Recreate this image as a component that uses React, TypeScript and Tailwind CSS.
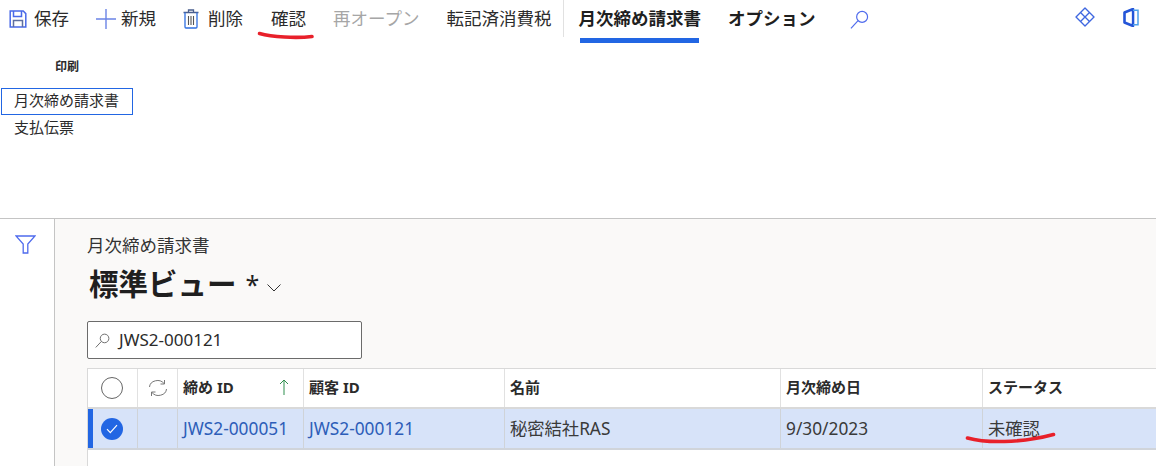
const FONT = "font-['Noto_Sans','Noto_Sans_CJK_JP',sans-serif]";

function SaveIcon() {
  return (
    <svg width="18" height="18" viewBox="0 0 18 18" fill="none" stroke="#4a6ae8" strokeWidth="1.5">
      <path d="M1.2 1h13l2.6 2.6V17H1.2z" />
      <path d="M4.5 1v5.5h8V1" />
      <path d="M4.5 17v-6.5h9V17" stroke="#5f6f9f" />
    </svg>
  );
}

function PlusIcon() {
  return (
    <svg width="20" height="20" viewBox="0 0 20 20" fill="none" stroke="#6b84e6" strokeWidth="1.4">
      <path d="M10 0v20M0 10h20" />
    </svg>
  );
}

function TrashIcon() {
  return (
    <svg width="16" height="20" viewBox="0 0 16 20" fill="none" stroke="#2f6fe0" strokeWidth="1.3">
      <path d="M0.5 3.5h15M5.5 3.5V1h5v2.5" stroke="#4a5f8f" />
      <path d="M2 3.5V18a1 1 0 0 0 1 1h10a1 1 0 0 0 1-1V3.5" />
      <path d="M5.5 7v9M8 7v9M10.5 7v9" stroke="#555" strokeWidth="1.1" />
    </svg>
  );
}

function SearchIcon({ color, size }: { color: string; size: number }) {
  return (
    <svg width={size} height={size} viewBox="0 0 16 16" fill="none" stroke={color} strokeWidth="1">
      <circle cx="10.2" cy="5.8" r="4.6" />
      <path d="M6.8 9 0.8 15.4" />
    </svg>
  );
}

function DiamondIcon() {
  return (
    <svg width="20" height="20" viewBox="0 0 20 20" fill="none" stroke="#3f67e0" strokeWidth="1.4" strokeLinejoin="round">
      <path d="M10 1 19 10 10 19 1 10z" />
      <path d="M5.5 5.5 14.5 14.5M14.5 5.5 5.5 14.5" />
    </svg>
  );
}

function OfficeIcon() {
  return (
    <svg width="16" height="19" viewBox="0 0 16 19" fill="none">
      <path d="M1.5 4.5 10 1v17l-8.5-3.5z" stroke="#2455d8" strokeWidth="2.6" strokeLinejoin="round" />
      <path d="M4.5 5.5 8.5 4v11l-4-1.5z" fill="white" />
      <path d="M10 2.2h5v14.6h-5" stroke="#4ca0ea" strokeWidth="1.5" />
    </svg>
  );
}

function FilterIcon() {
  return (
    <svg width="21" height="19" viewBox="0 0 21 19" fill="none" stroke="#4f6bed" strokeWidth="1.3">
      <path d="M1 1h19l-7.2 8v9H8.2V9z" />
    </svg>
  );
}

function ToolbarButton({ icon, label, muted, className }: { icon?: React.ReactNode; label: string; muted?: boolean; className?: string }) {
  return (
    <div className={`flex items-center text-[17.5px] leading-none ${muted ? "text-[#a6a6a6]" : "text-[#2b2b2b]"} ${className ?? "gap-[7px]"}`}>
      {icon}
      <span>{label}</span>
    </div>
  );
}

function Toolbar() {
  return (
    <div className="flex h-[43px] items-start">
      <div className="flex h-[38px] items-center pl-[9px]">
        <ToolbarButton icon={<SaveIcon />} label="保存" />
        <ToolbarButton icon={<PlusIcon />} label="新規" className="ml-[27px] gap-[5px]" />
        <ToolbarButton icon={<TrashIcon />} label="削除" className="ml-[27px] gap-[9px]" />
        <ToolbarButton label="確認" className="ml-[28px]" />
        <ToolbarButton label="再オープン" muted className="ml-[27px]" />
        <ToolbarButton label="転記済消費税" className="ml-[27px]" />
      </div>
      <div className="ml-[12px] h-[37px] w-px bg-[#e1e1e1]" />
      <div className="relative ml-[14px] flex h-[38px] items-center text-[17.5px] font-bold leading-none text-[#1f1f1f]">
        月次締め請求書
        <div className="absolute left-[2px] right-[2px] top-[38px] h-[5px] bg-[#2266e3]" />
      </div>
      <div className="ml-[27px] flex h-[38px] items-center text-[17.5px] font-bold leading-none text-[#1f1f1f]">
        オプション
      </div>
      <div className="ml-[35px] flex h-[38px] items-center">
        <SearchIcon color="#4f6bed" size={19} />
      </div>
      <div className="ml-auto flex h-[34px] items-center gap-[28px] pr-[17px]">
        <DiamondIcon />
        <OfficeIcon />
      </div>
    </div>
  );
}

function PrintMenu() {
  return (
    <div className="h-[176px] border-b border-[#c4c4c4]">
      <div className="pl-[55px] pt-[16px] text-[12px] font-bold leading-[16px] text-[#2b2b2b]">印刷</div>
      <div className="ml-[1px] mt-[13px] flex h-[27px] w-[132px] items-center border border-[#2266e3] pb-[3px] pl-[12px] text-[15px] text-[#2b2b2b]">
        月次締め請求書
      </div>
      <div className="flex h-[27px] items-center pb-[3px] pl-[14px] text-[15px] text-[#2b2b2b]">支払伝票</div>
    </div>
  );
}

function HeaderCell({ label, className, children }: { label: string; className: string; children?: React.ReactNode }) {
  return (
    <div className={`flex items-center justify-between border-r border-[#e1e1e1] pb-[2px] pl-[5px] text-[15px] font-bold text-[#2b2b2b] ${className}`}>
      <span>{label}</span>
      {children}
    </div>
  );
}

function RowCell({ label, className, link }: { label: string; className: string; link?: boolean }) {
  return (
    <div className={`flex items-center border-r border-[#cfd3d8] pl-[5px] text-[17.3px] ${link ? "text-[#2d5db8]" : "text-[#3a3a3a]"} ${className}`}>
      {label}
    </div>
  );
}

function Grid() {
  return (
    <div className="ml-[32px] mt-[9px] flex-1 border-l border-t border-[#d9d9d9] bg-white">
      <div className="flex h-[40px] border-b-2 border-[#d9d9d9]">
        <div className="flex w-[50px] items-center justify-center border-r border-[#e1e1e1] pr-[1px]">
          <div className="h-[22px] w-[22px] rounded-full border border-[#666]" />
        </div>
        <div className="flex w-[40px] items-center justify-center border-r border-[#e1e1e1]">
          <svg width="20" height="18" viewBox="0 0 20 18" fill="none" stroke="#777" strokeWidth="1">
            <path d="M1.5 8A8 7 0 0 1 16 4.5M18.5 10A8 7 0 0 1 4 13.5" />
            <path d="M16.5 1v4h-4M3.5 17v-4h4" />
          </svg>
        </div>
        <HeaderCell label="締め ID" className="w-[126px]">
          <svg className="mr-[14px]" width="10" height="16" viewBox="0 0 10 16" fill="none" stroke="#2f8f4e" strokeWidth="1">
            <path d="M5 16V1M1 5l4-4 4 4" />
          </svg>
        </HeaderCell>
        <HeaderCell label="顧客 ID" className="w-[201px]" />
        <HeaderCell label="名前" className="w-[276px]" />
        <HeaderCell label="月次締め日" className="w-[202px]" />
        <HeaderCell label="ステータス" className="flex-1 border-r-0" />
      </div>
      <div className="flex h-[41px] border-b-2 border-[#d0d4da] bg-[#d7e3f9]">
        <div className="flex w-[50px] items-center justify-center border-r border-[#cfd3d8] border-l-[5px] border-l-[#2266e3] pr-[6px]">
          <div className="flex h-[22px] w-[22px] items-center justify-center rounded-full bg-[#2266e3]">
            <svg width="12" height="10" viewBox="0 0 12 10" fill="none" stroke="white" strokeWidth="1.2">
              <path d="M1 5.2 4.3 8.6 11 1.2" />
            </svg>
          </div>
        </div>
        <div className="w-[40px] border-r border-[#cfd3d8]" />
        <RowCell label="JWS2-000051" link className="w-[126px]" />
        <RowCell label="JWS2-000121" link className="w-[201px]" />
        <RowCell label="秘密結社RAS" className="w-[276px]" />
        <RowCell label="9/30/2023" className="w-[202px]" />
        <RowCell label="未確認" className="flex-1 border-r-0" />
      </div>
    </div>
  );
}

function ListPanel() {
  return (
    <div className="flex flex-1">
      <div className="w-[55px] shrink-0 border-r border-[#c4c4c4] bg-white pl-[15px] pt-[16px]">
        <FilterIcon />
      </div>
      <div className="flex min-w-0 flex-1 flex-col bg-[#faf9f8]">
        <div className="ml-[32px] mt-[15px] text-[17.5px] leading-[22px] text-[#333]">月次締め請求書</div>
        <div className="ml-[34px] mt-[10px] flex h-[36px] items-center text-[29.5px] font-bold leading-none text-[#1f1f1f]">
          標準ビュー
          <span className="ml-[9px] text-[25px] font-normal">*</span>
          <svg className="ml-[8px] mt-[8px]" width="14" height="8" viewBox="0 0 14 8" fill="none" stroke="#333" strokeWidth="1">
            <path d="M0.5 0.5 7 7l6.5-6.5" />
          </svg>
        </div>
        <div className="ml-[32px] mt-[19px] flex h-[38px] w-[275px] items-center rounded-[2px] border border-[#6b6b6b] bg-white pl-[7px] text-[17px] text-[#2b2b2b]">
          <SearchIcon color="#666" size={15} />
          <span className="ml-[9px]">JWS2-000121</span>
        </div>
        <Grid />
      </div>
    </div>
  );
}

export default function App() {
  return (
    <div className={`relative flex h-[466px] w-[1156px] flex-col overflow-hidden bg-white ${FONT}`}>
      <Toolbar />
      <PrintMenu />
      <ListPanel />
      {/* red marker strokes drawn over the screenshot */}
      <svg className="pointer-events-none absolute left-0 top-0" width="1156" height="466" fill="none" stroke="#e8202a" strokeWidth="3.6" strokeLinecap="round">
        <path d="M259.5 33.5C272 37 296 38.5 312 36.5" />
        <path d="M967.5 438C985 443 1020 443.5 1053.5 434.5" />
      </svg>
    </div>
  );
}
